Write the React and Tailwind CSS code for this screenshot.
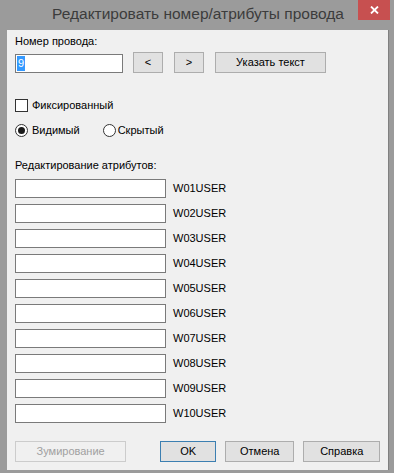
import { useState } from 'react'

// --- Small Win8-style controls ---
function Btn({ children, className = '', disabled, focused }) {
  return (
    <button
      disabled={disabled}
      className={`flex items-center justify-center h-[21px] text-[11px] bg-[#e1e1e1] border
                  ${focused ? 'border-[#3c7fb1]' : disabled ? 'border-[#cccccc] bg-[#f0f0f0] text-[#a0a0a0]' : 'border-[#adadad]'}
                  ${className}`}
    >
      {children}
    </button>
  )
}

function Field({ className = '', children }) {
  return (
    <div className={`h-[19px] bg-white border border-[#7a7a7a] flex items-center ${className}`}>
      {children}
    </div>
  )
}

const ATTRS = ['W01USER', 'W02USER', 'W03USER', 'W04USER', 'W05USER',
               'W06USER', 'W07USER', 'W08USER', 'W09USER', 'W10USER']

// --- Page ---
export default function App() {
  const [visible, setVisible] = useState(true)

  return (
    <div className="w-[394px] h-[473px] bg-[#9b9b9b] flex flex-col overflow-hidden"
         style={{ fontFamily: '"Liberation Sans", Arial, sans-serif' }}>

      {/* title bar */}
      <div className="h-[30px] flex items-start relative">
        <div className="flex-1 text-center text-[15.5px] text-[#3c3c3c] leading-[28px] pl-[2px]">
          Редактировать номер/атрибуты провода
        </div>
        <div className="absolute right-[4px] top-0 w-[32px] h-[20px] bg-[#c75050] flex items-center justify-center">
          <svg width="9" height="8" viewBox="0 0 9 8">
            <path d="M1 0.5 L8 7.5 M8 0.5 L1 7.5" stroke="white" strokeWidth="1.8" />
          </svg>
        </div>
      </div>

      {/* client area */}
      <div className="ml-[7px] mr-[5px] h-[440px] bg-[#f0f0f0] border-r border-[#808080] px-[8px] flex flex-col text-[11px] text-black">

        <div className="mt-[5px] h-[13px] leading-[13px]">Номер провода:</div>

        <div className="mt-[4px] flex items-center h-[21px]">
          <Field className="w-[108px] h-[19px] mt-[1px]">
            <span className="ml-[1px] px-[1px] bg-[#3399ff] text-white leading-[15px]">9</span>
          </Field>
          <Btn className="ml-[10px] w-[30px]">&lt;</Btn>
          <Btn className="ml-[11px] w-[30px]">&gt;</Btn>
          <Btn className="ml-[11px] w-[111px]">Указать текст</Btn>
        </div>

        <div className="mt-[26px] flex items-center h-[13px]">
          <div className="w-[13px] h-[13px] bg-white border border-[#333333]" />
          <span className="ml-[4px]">Фиксированный</span>
        </div>

        <div className="mt-[12px] flex items-center h-[13px]">
          <button onClick={() => setVisible(true)} className="flex items-center">
            <span className="w-[13px] h-[13px] rounded-full bg-white border border-[#333333] flex items-center justify-center">
              {visible && <span className="w-[7px] h-[7px] rounded-full bg-[#1a1a1a]" />}
            </span>
            <span className="ml-[4px]">Видимый</span>
          </button>
          <button onClick={() => setVisible(false)} className="flex items-center ml-[23px]">
            <span className="w-[13px] h-[13px] rounded-full bg-white border border-[#333333] flex items-center justify-center">
              {!visible && <span className="w-[7px] h-[7px] rounded-full bg-[#1a1a1a]" />}
            </span>
            <span className="ml-[2px]">Скрытый</span>
          </button>
        </div>

        <div className="mt-[22px] h-[13px] leading-[13px]">Редактирование атрибутов:</div>

        <div className="mt-[7px] flex flex-col gap-[7px]">
          {ATTRS.map((a) => (
            <div key={a} className="flex items-center h-[18px]">
              <Field className="w-[151px] h-[18px]" />
              <span className="ml-[7px]">{a}</span>
            </div>
          ))}
        </div>

        <div className="mt-[19px] flex items-center">
          <Btn disabled className="w-[112px] h-[20px]">Зумирование</Btn>
          <Btn focused className="ml-[34px] w-[56px] h-[20px]">OK</Btn>
          <Btn className="ml-[9px] w-[70px] h-[20px]">Отмена</Btn>
          <Btn className="ml-[9px] w-[77px] h-[20px]">Справка</Btn>
        </div>
      </div>
    </div>
  )
}
